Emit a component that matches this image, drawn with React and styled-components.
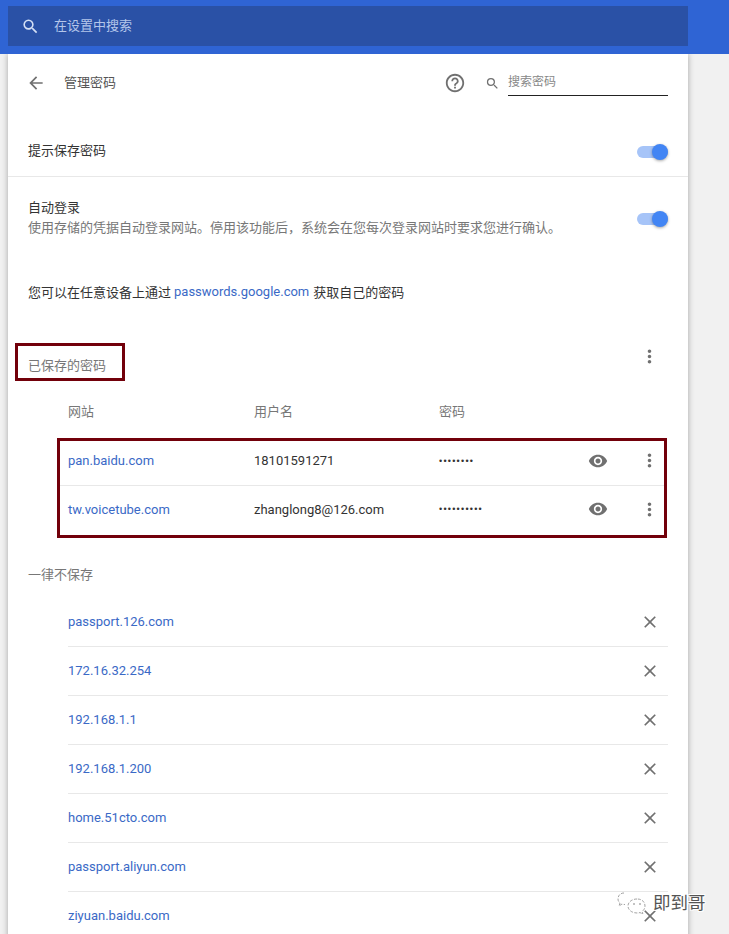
import React from "react";
import styled, { createGlobalStyle } from "styled-components";

const Global = createGlobalStyle`
  html, body { margin: 0; padding: 0; background: #f1f1f1; }
  body { font-family: Roboto, "Noto Sans CJK SC", sans-serif; font-size: 13px; color: #333; }
`;

const Page = styled.div`
  position: relative;
  width: 729px;
  height: 934px;
  overflow: hidden;
  background: #f1f1f1;
`;
const TopBar = styled.header`
  position: relative;
  z-index: 2;
  height: 54px;
  background: #2f64d4;
  padding: 6px 0 0 8px;
  box-sizing: border-box;
`;
const TopSearch = styled.div`
  width: 680px;
  height: 40px;
  background: #2a51a6;
  display: flex;
  align-items: center;
  padding-left: 13px;
  box-sizing: border-box;
  gap: 14px;
  color: #b4c6ea;
  font-size: 13px;
  svg { flex: none; }
`;
const TopHint = styled.span`
  margin-bottom: 4px;
`;
const Card = styled.main`
  width: 680px;
  margin-left: 8px;
  background: #fff;
  box-shadow: 0 0 6px rgba(0, 0, 0, 0.32);
`;
const TitleBar = styled.div`
  height: 58px;
  display: flex;
  align-items: center;
  padding: 0 20px 0 18px;
`;
const Title = styled.h1`
  margin: 0 0 3px 18px;
  font-size: 13px;
  font-weight: 400;
  color: #555;
  flex: 1;
`;
const Help = styled.span`
  display: flex;
  margin-right: 19px;
`;
const FilterIcon = styled.span`
  display: flex;
  margin-right: 8px;
`;
const FilterInput = styled.div`
  width: 160px;
  height: 25px;
  box-sizing: border-box;
  border-bottom: 1px solid #222;
  font-size: 12px;
  line-height: 22px;
  color: #888;
`;
const SettingRow = styled.div`
  display: flex;
  align-items: center;
  justify-content: space-between;
  padding: 0 20px ${(p) => p.$pb || 0}px;
  height: ${(p) => p.$h}px;
  margin-top: ${(p) => p.$top || 0}px;
  border-bottom: ${(p) => (p.$line ? "1px solid #e8e8e8" : "none")};
  box-sizing: ${(p) => (p.$line ? "content-box" : "border-box")};
`;
const Label = styled.div`
  font-size: 13px;
  line-height: 20px;
  color: #333;
`;
const Sub = styled.div`
  font-size: 13px;
  line-height: 20px;
  color: #777;
`;
const Track = styled.div`
  position: relative;
  width: 31px;
  height: 12px;
  border-radius: 6px;
  background: #a6c4f8;
  flex: none;
  margin-top: ${(p) => p.$nudge}px;
`;
const Knob = styled.div`
  position: absolute;
  right: 0;
  top: -2px;
  width: 16px;
  height: 16px;
  border-radius: 50%;
  background: #4285f4;
  box-shadow: 0 1px 3px rgba(0, 0, 0, 0.35);
`;
const InfoLine = styled.div`
  height: 38px;
  margin: 11px 0 0;
  padding: 0 20px;
  display: flex;
  align-items: center;
  font-size: 13px;
  color: #333;
`;
const Link = styled.a`
  color: #3a69c6;
  text-decoration: none;
`;
const InfoLink = styled(Link)`
  margin: 0 4px 0 3px;
`;
const SavedHead = styled.div`
  display: flex;
  align-items: flex-start;
  justify-content: space-between;
  margin-top: 33px;
  padding: 0 20px 0 7px;
`;
const RedTitle = styled.div`
  width: 110px;
  height: 38px;
  box-sizing: border-box;
  border: 3px solid #72000a;
  padding: 10px 0 0 10px;
  font-size: 13px;
  line-height: 20px;
  color: #777;
`;
const HeadMenu = styled.span`
  display: flex;
  margin: 3px 8px 0 0;
`;
const Grid = styled.div`
  display: grid;
  grid-template-columns: 186px 185px 141px 36px 1fr;
  align-items: center;
`;
const ColumnHead = styled(Grid)`
  height: 40px;
  margin: 9px 20px 0 60px;
  color: #777;
  font-size: 13px;
`;
const RedBox = styled.div`
  margin: 8px 21px 0 49px;
  border: 3px solid #72000a;
`;
const SavedRow = styled(Grid)`
  height: ${(p) => p.$h}px;
  box-sizing: border-box;
  padding: 0 0 ${(p) => p.$pb}px 8px;
  border-bottom: ${(p) => (p.$line ? "1px solid #e8e8e8" : "none")};
`;
const Cell = styled.div`
  font-size: 13px;
  color: #333;
`;
const Dots = styled.div`
  font-family: "Liberation Sans", sans-serif;
  font-size: 9px;
  letter-spacing: 1.25px;
  color: #333;
`;
const EyeCell = styled.div`
  display: flex;
  justify-content: center;
`;
const MenuCell = styled.div`
  display: flex;
  justify-content: center;
  padding-left: 19px;
`;
const SectionTitle = styled.div`
  margin-top: 15px;
  padding: 0 0 5px 20px;
  height: 45px;
  box-sizing: border-box;
  display: flex;
  align-items: center;
  font-size: 13px;
  color: #777;
`;
const ExcludedRow = styled.div`
  margin: 0 20px 0 60px;
  height: 49px;
  box-sizing: border-box;
  display: flex;
  align-items: center;
  justify-content: space-between;
  border-bottom: 1px solid #e8e8e8;
  padding-right: 8px;
`;
const ExcludedLink = styled(Link)`
  margin-bottom: 2px;
`;
const Watermark = styled.div`
  position: absolute;
  left: 617px;
  top: 889px;
  display: flex;
  align-items: center;
  gap: 5px;
  font-size: 17.5px;
  color: #555;
  text-shadow: 1px 1px 0 #fff, -1px -1px 0 #fff, 1px -1px 0 #fff, -1px 1px 0 #fff;
`;

const Icon = ({ d, size = 24, color = "#707070" }) => (
  <svg width={size} height={size} viewBox="0 0 24 24" fill={color}><path d={d} /></svg>
);
const SEARCH = "M15.5 14h-.79l-.28-.27A6.47 6.47 0 0 0 16 9.5 6.500 6.500 0 1 0 9.5 16c1.61 0 3.09-.59 4.23-1.57l.27.28v.79l5 4.99L20.49 19l-4.99-5zm-6 0C7.01 14 5 11.99 5 9.5S7.01 5 9.5 5 14 7.01 14 9.5 11.99 14 9.5 14z";
const BACK = "M20 11H7.83l5.59-5.59L12 4l-8 8 8 8 1.41-1.41L7.83 13H20v-2z";
const HELP = "M11 18h2v-2h-2v2zm1-16C6.48 2 2 6.48 2 12s4.48 10 10 10 10-4.48 10-10S17.52 2 12 2zm0 18c-4.41 0-8-3.59-8-8s3.59-8 8-8 8 3.59 8 8-3.59 8-8 8zm0-14c-2.21 0-4 1.79-4 4h2c0-1.1.9-2 2-2s2 .9 2 2c0 2-3 1.75-3 5h2c0-2.25 3-2.5 3-5 0-2.21-1.79-4-4-4z";
const MORE = "M12 8c1.1 0 2-.9 2-2s-.9-2-2-2-2 .9-2 2 .9 2 2 2zm0 2c-1.1 0-2 .9-2 2s.9 2 2 2 2-.9 2-2-.9-2-2-2zm0 6c-1.1 0-2 .9-2 2s.9 2 2 2 2-.9 2-2-.9-2-2-2z";
const EYE = "M12 4.5C7 4.5 2.73 7.61 1 12c1.73 4.39 6 7.5 11 7.5s9.27-3.11 11-7.5c-1.73-4.39-6-7.5-11-7.5zM12 17c-2.76 0-5-2.24-5-5s2.24-5 5-5 5 2.24 5 5-2.24 5-5 5zm0-8c-1.66 0-3 1.34-3 3s1.34 3 3 3 3-1.34 3-3-1.34-3-3-3z";
const CLOSE = "M19 6.41 17.59 5 12 10.59 6.41 5 5 6.41 10.59 12 5 17.59 6.41 19 12 13.41 17.59 19 19 17.59 13.41 12z";

const saved = [
  { site: "pan.baidu.com", user: "18101591271", pass: "••••••••", h: 45, pb: 5, line: true },
  { site: "tw.voicetube.com", user: "zhanglong8@126.com", pass: "••••••••••", h: 49, pb: 3 },
];
const excluded = ["passport.126.com", "172.16.32.254", "192.168.1.1", "192.168.1.200", "home.51cto.com", "passport.aliyun.com", "ziyuan.baidu.com"];

export default function App() {
  return (
    <Page>
      <Global />
      <TopBar>
        <TopSearch>
          <Icon d={SEARCH} size={19} color="#d5e0f5" />
          <TopHint>在设置中搜索</TopHint>
        </TopSearch>
      </TopBar>
      <Card>
        <TitleBar>
          <Icon d={BACK} size={20} />
          <Title>管理密码</Title>
          <Help><Icon d={HELP} size={22} /></Help>
          <FilterIcon><Icon d={SEARCH} size={15} /></FilterIcon>
          <FilterInput>搜索密码</FilterInput>
        </TitleBar>
        <SettingRow $h={48} $pb={1} $top={15} $line>
          <Label>提示保存密码</Label>
          <Track $nudge={1}><Knob /></Track>
        </SettingRow>
        <SettingRow $h={84} $pb={2}>
          <div>
            <Label>自动登录</Label>
            <Sub>使用存储的凭据自动登录网站。停用该功能后，系统会在您每次登录网站时要求您进行确认。</Sub>
          </div>
          <Track $nudge={2}><Knob /></Track>
        </SettingRow>
        <InfoLine>
          您可以在任意设备上通过<InfoLink>passwords.google.com</InfoLink>获取自己的密码
        </InfoLine>
        <SavedHead>
          <RedTitle>已保存的密码</RedTitle>
          <HeadMenu><Icon d={MORE} size={21} /></HeadMenu>
        </SavedHead>
        <ColumnHead>
          <span>网站</span>
          <span>用户名</span>
          <span>密码</span>
        </ColumnHead>
        <RedBox>
          {saved.map((r) => (
            <SavedRow key={r.site} $h={r.h} $pb={r.pb} $line={r.line}>
              <Link>{r.site}</Link>
              <Cell>{r.user}</Cell>
              <Dots>{r.pass}</Dots>
              <EyeCell><Icon d={EYE} size={20} /></EyeCell>
              <MenuCell><Icon d={MORE} size={21} /></MenuCell>
            </SavedRow>
          ))}
        </RedBox>
        <SectionTitle>一律不保存</SectionTitle>
        {excluded.map((s) => (
          <ExcludedRow key={s}>
            <ExcludedLink>{s}</ExcludedLink>
            <Icon d={CLOSE} size={20} />
          </ExcludedRow>
        ))}
      </Card>
      <Watermark>
        <svg width="31" height="24" viewBox="0 0 31 24" fill="none" stroke="#8a8a8a" strokeWidth="0.8" strokeDasharray="3 1.5">
          <path d="M7 3c-4 0-6 3-6 6 0 2 1 3 2 4l-1 3 3-2c1 .4 2 .5 3 .5" />
          <path d="M20 9c-5 0-9 3-9 7s4 7 9 7c1 0 2 0 3-.5l3 2-1-3c2-1.400 3-3.500 3-5.500 0-4-3-7-8-7z" />
          <circle cx="17" cy="14" r="0.8" fill="#777" stroke="none" />
          <circle cx="23" cy="14" r="0.8" fill="#777" stroke="none" />
        </svg>
        <span>即到哥</span>
      </Watermark>
    </Page>
  );
}
